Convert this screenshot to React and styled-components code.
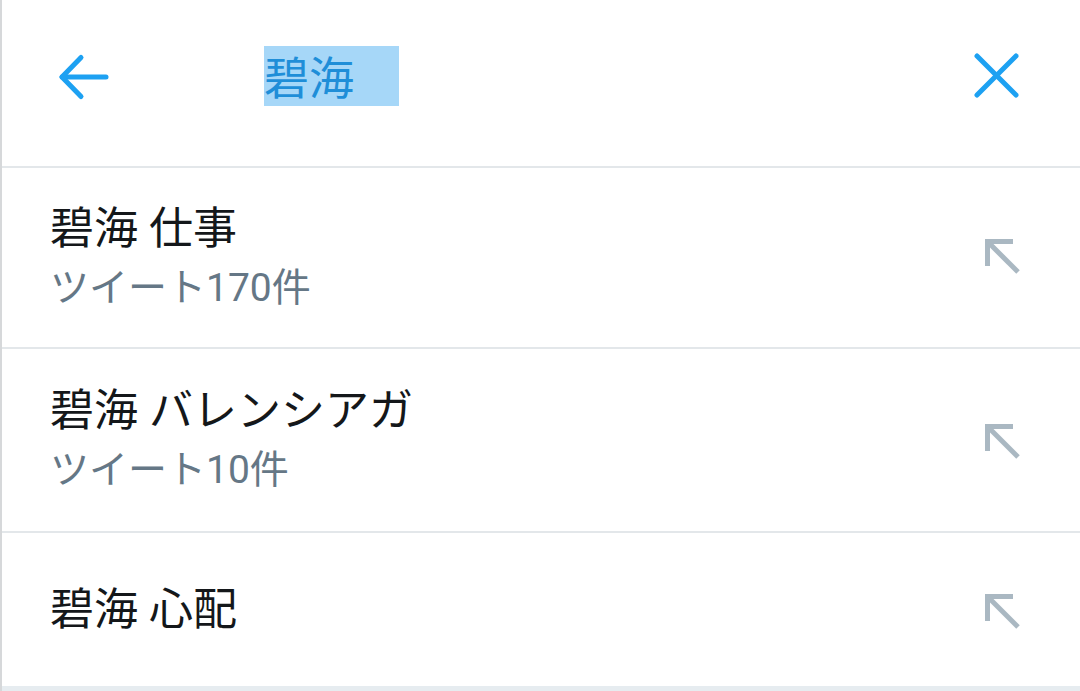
import React from "react";
import styled, { createGlobalStyle } from "styled-components";

const Global = createGlobalStyle`
  html, body { margin: 0; padding: 0; }
  body {
    background: #e6ecf0;
    font-family: Roboto, "Noto Sans CJK JP", sans-serif;
    overflow: hidden;
  }
`;

const Page = styled.div`
  height: 691px;
  border-left: 2px solid #d6d8da;
  box-sizing: border-box;
  display: flex;
  flex-direction: column;
`;

const Panel = styled.div`
  background: #ffffff;
  display: flex;
  flex-direction: column;
`;

const Header = styled.header`
  height: 168px;
  box-sizing: border-box;
  display: flex;
  align-items: flex-start;
  padding: 46px 54px 0 50px;
  border-bottom: 2px solid #e3e7ea;
`;

const IconButton = styled.button`
  width: 60px;
  height: 60px;
  padding: 0;
  border: none;
  background: transparent;
  display: flex;
  align-items: center;
  justify-content: center;
  color: #1da1f2;
  flex: none;
`;

const Query = styled.div`
  flex: 1;
  padding-left: 152px;
  display: flex;
  align-items: center;
  height: 60px;
`;

const Selection = styled.span`
  display: inline-block;
  height: 60px;
  line-height: 60px;
  font-size: 45px;
  color: #1f8ed8;
  background: #a6d7f8;
  padding-right: 45px;
  font-family: "Noto Sans CJK JP", sans-serif;
`;

const Row = styled.div`
  height: ${(p) => p.$h}px;
  box-sizing: border-box;
  display: flex;
  align-items: center;
  padding: 0 58px 0 48px;
  border-bottom: ${(p) => (p.$last ? "none" : "2px solid #e3e7ea")};
`;

const Texts = styled.div`
  flex: 1;
  display: flex;
  flex-direction: column;
`;

const Title = styled.div`
  font-size: 44px;
  line-height: 60px;
  color: #14171a;
`;

const Sub = styled.div`
  font-size: 39px;
  line-height: 58px;
  color: #657786;
`;

const FillIcon = styled.span`
  width: 40px;
  height: 40px;
  display: flex;
  color: #aab8c2;
  flex: none;
  margin-top: ${(p) => p.$shift || 0}px;
`;

const BackIcon = () => (
  <svg width="60" height="60" viewBox="0 0 60 60" fill="none" stroke="currentColor" strokeWidth="5" strokeLinecap="round" strokeLinejoin="round">
    <path d="M10 31 H54" />
    <path d="M29 11.5 L10 31 L29 50.5" />
  </svg>
);

const CloseIcon = () => (
  <svg width="60" height="60" viewBox="0 0 60 60" fill="none" stroke="currentColor" strokeWidth="5" strokeLinecap="round">
    <path d="M11 10 L50 49" />
    <path d="M50 10 L11 49" />
  </svg>
);

const FillArrow = () => (
  <svg width="40" height="40" viewBox="0 0 40 40" fill="none" stroke="currentColor" strokeWidth="5" strokeLinejoin="miter">
    <path d="M31 6.5 H5.5 V31" />
    <path d="M6 7 L36 37" />
  </svg>
);

const items = [
  { title: "碧海 仕事", sub: "ツイート170件", h: 181, shift: -6 },
  { title: "碧海 バレンシアガ", sub: "ツイート10件", h: 184 },
  { title: "碧海 心配", h: 153 },
];

export default function App() {
  return (
    <>
      <Global />
      <Page>
        <Panel>
          <Header>
            <IconButton aria-label="戻る">
              <BackIcon />
            </IconButton>
            <Query>
              <Selection>碧海</Selection>
            </Query>
            <IconButton aria-label="クリア">
              <CloseIcon />
            </IconButton>
          </Header>
          {items.map((it, i) => (
            <Row key={i} $h={it.h} $last={i === items.length - 1}>
              <Texts>
                <Title>{it.title}</Title>
                {it.sub && <Sub>{it.sub}</Sub>}
              </Texts>
              <FillIcon $shift={it.shift}>
                <FillArrow />
              </FillIcon>
            </Row>
          ))}
        </Panel>
      </Page>
    </>
  );
}
